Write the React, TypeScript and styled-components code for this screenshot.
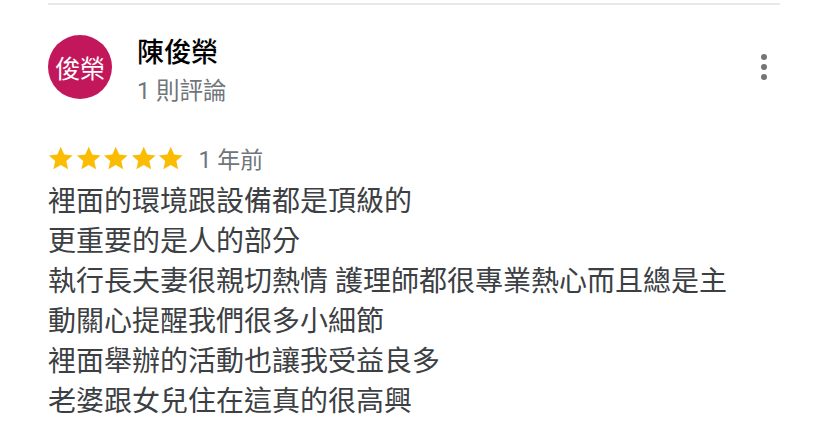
import styled, { createGlobalStyle } from 'styled-components';

const GlobalStyle = createGlobalStyle`
  body {
    margin: 0;
    background: #ffffff;
    font-family: Roboto, "Noto Sans CJK TC", sans-serif;
  }
`;

const Card = styled.div`
  width: 827px;
  height: 435px;
  box-sizing: border-box;
  padding: 3px 47px 0 48px;
  background: #ffffff;
`;

const Divider = styled.div`
  height: 2px;
  background: #e8e8ec;
`;

const Header = styled.div`
  display: flex;
  align-items: flex-start;
  margin-top: 30px;
`;

const Avatar = styled.div`
  width: 64px;
  height: 64px;
  border-radius: 50%;
  background: #c2185b;
  color: #ffffff;
  font-size: 25px;
  display: flex;
  align-items: center;
  justify-content: center;
  flex-shrink: 0;
`;

const Author = styled.div`
  flex: 1;
  margin-left: 25px;
  display: flex;
  flex-direction: column;
`;

const Name = styled.div`
  font-size: 27px;
  line-height: 32px;
  font-weight: 500;
  color: #000000;
  margin-top: 2px;
`;

const Meta = styled.div`
  font-size: 23.5px;
  line-height: 30px;
  color: #70757a;
  margin-top: 7px;
`;

const MoreButton = styled.div`
  width: 30px;
  display: flex;
  flex-direction: column;
  align-items: center;
  gap: 4px;
  margin-top: 19px;
  margin-right: 1px;
`;

const Dot = styled.span`
  width: 6px;
  height: 6px;
  border-radius: 50%;
  background: #757575;
`;

const RatingRow = styled.div`
  display: flex;
  align-items: center;
  margin-top: 35px;
`;

const Stars = styled.div`
  display: flex;
  gap: 2px;
`;

const Age = styled.span`
  font-size: 23px;
  color: #70757a;
  margin-left: 15px;
`;

const Body = styled.div`
  font-size: 28px;
  line-height: 40px;
  color: #3c4043;
  margin-top: 7px;
`;

function Star() {
  return (
    <svg width="25.5" height="25" viewBox="0 0 24 24">
      <path
        fill="#fbbc04"
        d="M12 .8l3.3 7.4 8.1.8-6.1 5.4 1.8 8L12 18.3l-7.1 4.1 1.8-8L.6 9l8.1-.8z"
      />
    </svg>
  );
}

const lines = [
  '裡面的環境跟設備都是頂級的',
  '更重要的是人的部分',
  '執行長夫妻很親切熱情 護理師都很專業熱心而且總是主',
  '動關心提醒我們很多小細節',
  '裡面舉辦的活動也讓我受益良多',
  '老婆跟女兒住在這真的很高興',
];

export default function App() {
  return (
    <Card>
      <GlobalStyle />
      <Divider />
      <Header>
        <Avatar>俊榮</Avatar>
        <Author>
          <Name>陳俊榮</Name>
          <Meta>1 則評論</Meta>
        </Author>
        <MoreButton>
          <Dot />
          <Dot />
          <Dot />
        </MoreButton>
      </Header>
      <RatingRow>
        <Stars>
          {[0, 1, 2, 3, 4].map((i) => (
            <Star key={i} />
          ))}
        </Stars>
        <Age>1 年前</Age>
      </RatingRow>
      <Body>
        {lines.map((l, i) => (
          <div key={i}>{l}</div>
        ))}
      </Body>
    </Card>
  );
}
